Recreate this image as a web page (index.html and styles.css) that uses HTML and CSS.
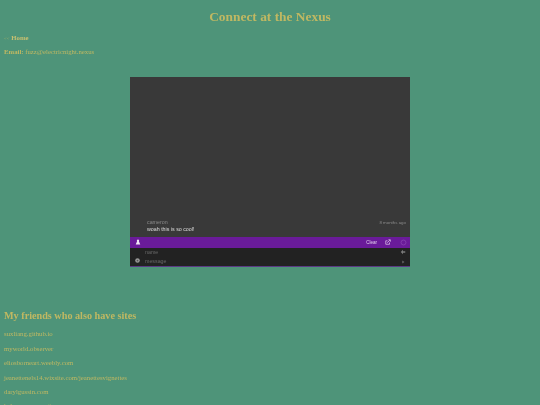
FILE: index.html
```html
<!DOCTYPE html>
<html lang="en">
<head>
<meta charset="utf-8">
<title>Connect at the Nexus</title>
<link rel="stylesheet" href="styles.css">
</head>
<body>
<h1 class="title">Connect at the Nexus</h1>
<p class="line"><span class="arrow">&lt;&lt;</span> <a class="home" href="#">Home</a></p>
<p class="line"><strong>Email:</strong> fuzz@electricnight.nexus</p>
<div class="chat-wrap">
  <div class="chat">
    <div class="messages">
      <div class="msg-head"><span>cameron</span><span class="time">8 months ago</span></div>
      <div class="msg-text">woah this is so cool!</div>
    </div>
    <div class="bar">
      <svg class="icon-user" viewBox="0 0 8 8"><path d="M4 .6a1.5 1.5 0 0 1 1.2 2.4L7 7.2H1L2.8 3A1.5 1.5 0 0 1 4 .6z"/></svg>
      <span class="spacer"></span>
      <span class="clear">Clear</span>
      <svg class="icon-pop" viewBox="0 0 8 8"><path d="M6 4.6V7H1V2.4h2.4" /><path d="M3 5l3.6-3.6M4.6 1h2.6v2.6"/></svg>
      <svg class="icon-circle" viewBox="0 0 8 8"><circle cx="4" cy="4" r="2.8"/></svg>
    </div>
    <div class="form">
      <div class="form-side"><svg class="icon-gear" viewBox="0 0 8 8"><circle cx="4" cy="4" r="2.6"/><circle class="hole" cx="4" cy="4" r="1"/></svg></div>
      <div class="fields">
        <div class="field"><span>name</span><svg class="icon-send" viewBox="0 0 8 8"><path d="M1 4l3-3v2h3v2H4v2z"/></svg></div>
        <div class="field"><span>message</span><svg class="icon-send small" viewBox="0 0 8 8"><path d="M3 2l3 2-3 2z"/></svg></div>
      </div>
    </div>
  </div>
</div>
<h2 class="friends">My friends who also have sites</h2>
<p class="line link">suxliang.github.io</p>
<p class="line link">myworld.observer</p>
<p class="line link">eliosborneart.weebly.com</p>
<p class="line link">jeanettenels14.wixsite.com/jeanettesvignettes</p>
<p class="line link">darylgussin.com</p>
<p class="line link">kalyumsperspective.com</p>
</body>
</html>
```
FILE: styles.css
```css
html, body {
  height: 405px;
  overflow: hidden;
}
body {
  margin: 0;
  padding: 0 4px;
  background: #4e9479;
  color: #c0b862;
  font-family: "Liberation Serif", serif;
  font-size: 6.75px;
  line-height: 9px;
  filter: blur(0.4px);
}
.title {
  margin: 0;
  padding-top: 9px;
  height: 30px;
  box-sizing: border-box;
  line-height: 16px;
  font-size: 13.4px;
  font-weight: bold;
  text-align: center;
}
.line {
  margin: 0;
  padding: 2.7px 0;
  height: 14.4px;
  box-sizing: border-box;
}
.arrow { opacity: 0.75; font-size: 5px; }
.home { color: #c8c070; text-decoration: none; font-weight: bold; }
.chat-wrap {
  display: flex;
  justify-content: center;
  margin-top: 18px;
}
.chat {
  width: 280px;
  height: 190px;
  display: flex;
  flex-direction: column;
  background: #383838;
  font-family: "Liberation Sans", sans-serif;
  font-size: 5.3px;
  line-height: 7px;
}
.messages {
  flex: 1;
  display: flex;
  flex-direction: column;
  justify-content: flex-end;
  padding: 0 4px 4px 17px;
  background: #393939;
}
.msg-head {
  display: flex;
  justify-content: space-between;
  color: #8a8a8a;
}
.time { font-size: 4.4px; }
.msg-text { color: #dcdcdc; }
.bar {
  height: 11px;
  display: flex;
  align-items: center;
  gap: 8px;
  padding: 0 4px 0 5px;
  background: #6a1b9a;
}
.spacer { flex: 1; }
.clear { color: #e0cdec; font-size: 4.5px; }
.bar svg { width: 6px; height: 6px; }
.icon-user { fill: #f0e6f5; flex: none; }
.icon-pop { fill: none; stroke: #e6d4f0; stroke-width: 0.9; }
.bar .icon-circle { fill: none; stroke: #8f4db8; stroke-width: 0.7; width: 7px; height: 7px; margin-left: 1px; margin-right: -1px; }
.form {
  height: 18px;
  display: flex;
  background: #222222;
  border-bottom: 1px solid #5b3a85;
}
.form-side {
  width: 15px;
  display: flex;
  align-items: flex-end;
  justify-content: center;
  padding-bottom: 2px;
}
.icon-gear { width: 7px; height: 7px; fill: #9a9a9a; }
.hole { fill: #555555; }
.fields { flex: 1; display: flex; flex-direction: column; }
.field {
  flex: 1;
  display: flex;
  justify-content: space-between;
  align-items: center;
  padding: 0 4px 0 0;
  color: #686868;
}
.field + .field { padding-top: 1px; }
.icon-send { width: 6px; height: 6px; fill: #7a7a7a; }
.icon-send.small { fill: #666666; }
.friends {
  margin: 42px 0 0;
  height: 18px;
  line-height: 14px;
  font-size: 10.2px;
  font-weight: bold;
}
```
